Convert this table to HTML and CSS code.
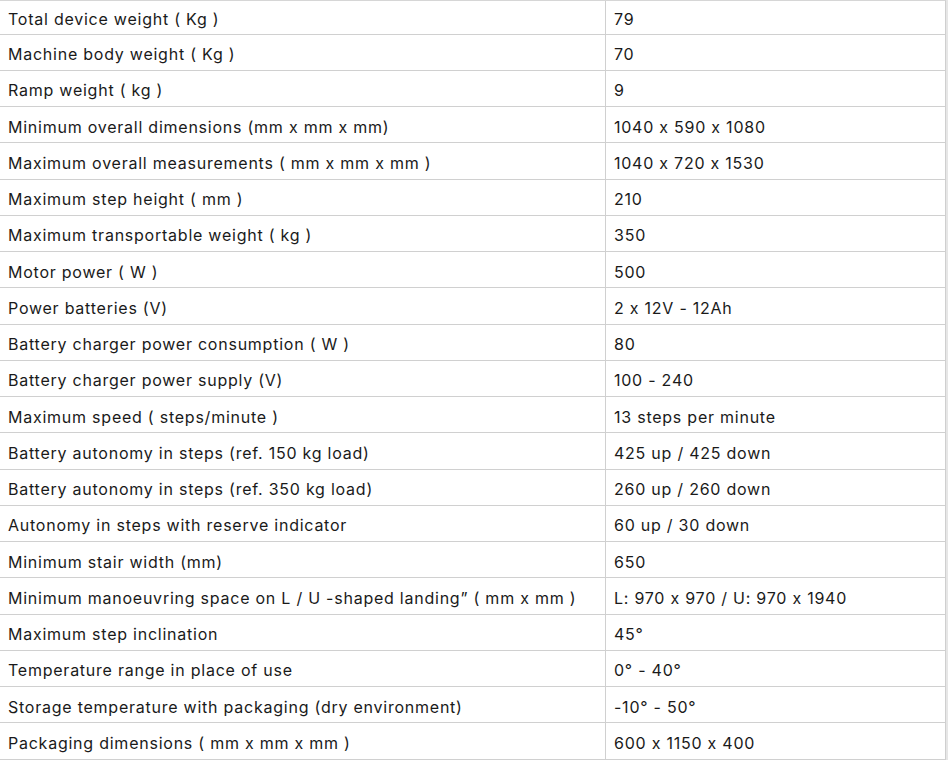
FILE: index.html
```html
<!DOCTYPE html>
<html lang="en">
<head>
<meta charset="utf-8">
<title>Specifications</title>
<link rel="stylesheet" href="styles.css">
</head>
<body>
<div class="wrap">
  <div class="spec">
    <div class="row first"><div class="k">Total device weight ( Kg )</div><div class="v">79</div></div>
    <div class="row"><div class="k">Machine body weight ( Kg )</div><div class="v">70</div></div>
    <div class="row"><div class="k">Ramp weight ( kg )</div><div class="v">9</div></div>
    <div class="row"><div class="k">Minimum overall dimensions (mm x mm x mm)</div><div class="v">1040 x 590 x 1080</div></div>
    <div class="row"><div class="k">Maximum overall measurements ( mm x mm x mm )</div><div class="v">1040 x 720 x 1530</div></div>
    <div class="row"><div class="k">Maximum step height ( mm )</div><div class="v">210</div></div>
    <div class="row"><div class="k">Maximum transportable weight ( kg )</div><div class="v">350</div></div>
    <div class="row"><div class="k">Motor power ( W )</div><div class="v">500</div></div>
    <div class="row"><div class="k">Power batteries (V)</div><div class="v">2 x 12V - 12Ah</div></div>
    <div class="row"><div class="k">Battery charger power consumption ( W )</div><div class="v">80</div></div>
    <div class="row"><div class="k">Battery charger power supply (V)</div><div class="v">100 - 240</div></div>
    <div class="row"><div class="k">Maximum speed ( steps/minute )</div><div class="v">13 steps per minute</div></div>
    <div class="row"><div class="k">Battery autonomy in steps (ref. 150 kg load)</div><div class="v">425 up / 425 down</div></div>
    <div class="row"><div class="k">Battery autonomy in steps (ref. 350 kg load)</div><div class="v">260 up / 260 down</div></div>
    <div class="row"><div class="k">Autonomy in steps with reserve indicator</div><div class="v">60 up / 30 down</div></div>
    <div class="row"><div class="k">Minimum stair width (mm)</div><div class="v">650</div></div>
    <div class="row"><div class="k">Minimum manoeuvring space on L / U -shaped landing” ( mm x mm )</div><div class="v">L: 970 x 970 / U: 970 x 1940</div></div>
    <div class="row"><div class="k">Maximum step inclination</div><div class="v">45°</div></div>
    <div class="row"><div class="k">Temperature range in place of use</div><div class="v">0° - 40°</div></div>
    <div class="row"><div class="k">Storage temperature with packaging (dry environment)</div><div class="v">-10° - 50°</div></div>
    <div class="row"><div class="k">Packaging dimensions ( mm x mm x mm )</div><div class="v">600 x 1150 x 400</div></div>
  </div>
</div>
</body>
</html>
```
FILE: styles.css
```css
html, body {
  margin: 0;
  padding: 0;
  background: #ffffff;
}
body {
  font-family: "Inter", "Liberation Sans", sans-serif;
  font-size: 16px;
  letter-spacing: 0.76px;
  color: #1a1a1a;
  font-feature-settings: "calt" 0;
}
.wrap {
  width: 946px;
  border-right: 2px solid #e6e6e6;
}
.spec {
  border-top: 1px solid #d6d6d6;
  border-right: 1px solid #cfcfcf;
}
.row {
  display: grid;
  grid-template-columns: 605px 1fr;
  height: 36.25px;
  box-sizing: border-box;
  border-bottom: 1px solid #d0d0d0;
}
.row.first {
  height: 33.5px;
}
.k, .v {
  display: flex;
  align-items: center;
  padding-top: 4px;
  padding-left: 8px;
  white-space: nowrap;
}
.v {
  border-left: 1px solid #d0d0d0;
}
```
